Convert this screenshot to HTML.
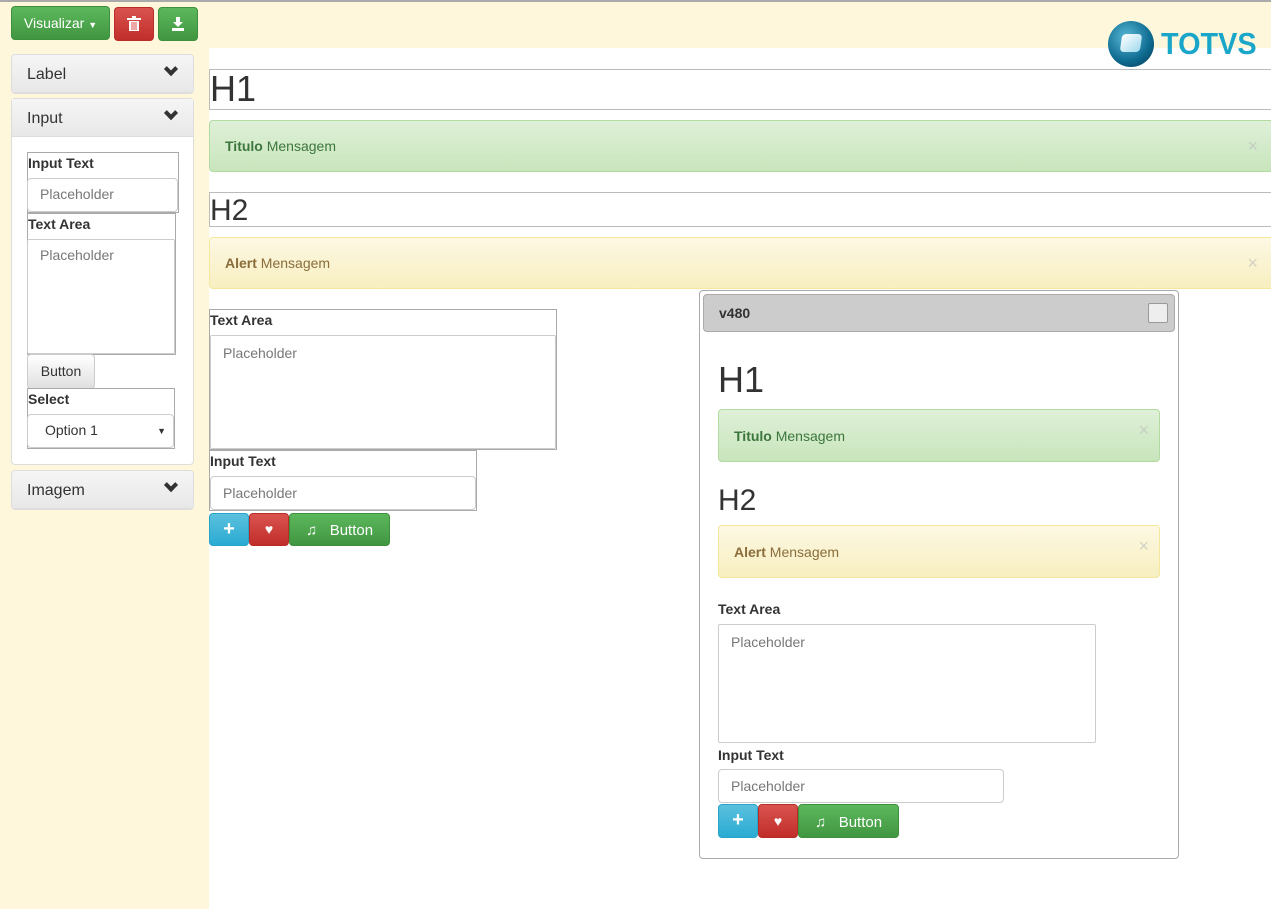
<!DOCTYPE html>
<html><head><meta charset="utf-8"><style>
*{box-sizing:border-box;margin:0;padding:0}
body{width:1271px;height:909px;overflow:hidden;background:#fff;font-family:"Liberation Sans",sans-serif;font-size:14px;color:#333;position:relative}
.a{position:absolute}
.beige{background:#fff7dc}
.btn{position:absolute;border-radius:4px;color:#fff;text-align:center;font-size:14px}
.g{background:linear-gradient(#5cb85c,#419641);border:1px solid #3e8f3e}
.r{background:linear-gradient(#d9534f,#c12e2a);border:1px solid #b92c28}
.b{background:linear-gradient(#5bc0de,#2aabd2);border:1px solid #28a4c9}
.panel{position:absolute;border:1px solid #ddd;border-radius:4px;background:#fff}
.ph{background:linear-gradient(#f5f5f5,#e8e8e8);height:38px;padding:11px 15px;font-size:16px;position:relative;border-bottom:1px solid #ddd}
.chev{position:absolute;right:17px;top:9px;width:10px;height:10px;border-right:4px solid #333;border-bottom:4px solid #333;transform:rotate(45deg)}
.box{position:absolute;border:1px solid #aaa}
.lbl{font-weight:bold;font-size:14px;padding-left:0;padding-top:2px}
.inp{position:absolute;border:1px solid #ccc;border-radius:4px;color:#777;padding:7px 12px;font-size:14px;background:#fff}
.h{position:absolute;border:1px solid #bbb;font-size:36px;line-height:38px}
.al{position:absolute;border-radius:4px;padding:0 15px;line-height:50px;font-size:14px}
.ok{background:linear-gradient(#dff0d8,#c8e5bc);border:1px solid #b2dba1;color:#3c763d}
.wa{background:linear-gradient(#fcf8e3,#f8efc0);border:1px solid #f5e79e;color:#8a6d3b}
.x{position:absolute;right:10px;top:0;color:#bbb;font-size:18px;opacity:.6}
</style></head><body>
<div class="a" style="left:0;top:0;width:1271px;height:2px;background:#aaa"></div>
<div class="a beige" style="left:0;top:2px;width:1271px;height:46px"></div>
<div class="a beige" style="left:0;top:48px;width:209px;height:861px"></div>
<div class="btn g" style="left:11px;top:6px;width:99px;height:34px;line-height:32px">Visualizar <span style="font-size:9px">▼</span></div>
<div class="btn r" style="left:114px;top:7px;width:40px;height:34px;line-height:32px">
<svg width="14" height="16" viewBox="0 0 14 16" style="margin-top:8px"><rect x="0" y="2" width="14" height="2" fill="#fff"/><rect x="5" y="0" width="4" height="2" fill="#fff"/><path d="M2 5h10v10H2z" fill="#fff"/><path d="M5 6v8M7 6v8M9 6v8" stroke="#d9534f" stroke-width="1"/></svg></div>
<div class="btn g" style="left:158px;top:7px;width:40px;height:34px">
<svg width="14" height="14" viewBox="0 0 14 14" style="margin-top:9px"><path d="M5 0h4v5h3L7 10 2 5h3z" fill="#fff"/><rect x="1" y="11" width="12" height="3" fill="#fff"/></svg></div>
<!-- logo -->
<div class="a" style="left:1108px;top:21px;width:46px;height:46px;border-radius:50%;background:radial-gradient(circle at 40% 35%,#5ab8d6,#0d6a8f 60%,#08364f)"></div>
<div class="a" style="left:1121px;top:34px;width:20px;height:18px;background:linear-gradient(135deg,#fff,#9fd9ee);border-radius:4px;transform:skew(-8deg)"></div>
<div class="a" style="left:1161px;top:26px;font-size:31px;font-weight:bold;color:#1aa6c9;line-height:36px;transform:scaleX(0.93);transform-origin:left">TOTVS</div>
<!-- sidebar -->
<div class="panel" style="left:11px;top:54px;width:183px;height:40px;overflow:hidden"><div class="ph">Label<div class="chev"></div></div></div>
<div class="panel" style="left:11px;top:98px;width:183px;height:367px"><div class="ph">Input<div class="chev"></div></div>
<div class="box" style="left:15px;top:53px;width:152px;height:61px"><div class="lbl">Input Text</div></div>
<div class="inp" style="left:15px;top:79px;width:151px;height:34px">Placeholder</div>
<div class="box" style="left:15px;top:114px;width:149px;height:142px"><div class="lbl">Text Area</div></div>
<div class="inp" style="left:15px;top:140px;width:148px;height:115px;border-radius:2px">Placeholder</div>
<div class="a" style="left:15px;top:255px;width:68px;height:35px;border:1px solid #ccc;border-radius:4px;background:linear-gradient(#fff,#e0e0e0);text-align:center;line-height:33px">Button</div>
<div class="box" style="left:15px;top:289px;width:148px;height:61px"><div class="lbl">Select</div></div>
<div class="inp" style="left:15px;top:315px;width:147px;height:34px;color:#333;padding-left:17px">Option 1<span style="position:absolute;right:7px;font-size:9px;top:11px">▼</span></div>
</div>
<div class="panel" style="left:11px;top:470px;width:183px;height:40px;overflow:hidden"><div class="ph">Imagem<div class="chev"></div></div></div>
<!-- content -->
<div class="h" style="left:209px;top:69px;width:1070px;height:41px;border-right:none">H1</div>
<div class="al ok" style="left:209px;top:120px;width:1070px;height:52px"><b>Titulo</b> Mensagem<span class="x" style="right:20px;line-height:50px">×</span></div>
<div class="h" style="left:209px;top:192px;width:1070px;height:35px;font-size:30px;line-height:36px">H2</div>
<div class="al wa" style="left:209px;top:237px;width:1070px;height:52px"><b>Alert</b> Mensagem<span class="x" style="right:20px;line-height:50px">×</span></div>
<div class="box" style="left:209px;top:309px;width:348px;height:141px"><div class="lbl">Text Area</div></div>
<div class="inp" style="left:210px;top:335px;width:346px;height:114px;border-radius:2px;padding-top:9px">Placeholder</div>
<div class="box" style="left:209px;top:450px;width:268px;height:61px"><div class="lbl">Input Text</div></div>
<div class="inp" style="left:210px;top:476px;width:266px;height:34px;padding-top:8px">Placeholder</div>
<div class="btn b" style="left:209px;top:513px;width:40px;height:33px;line-height:30px;font-size:20px;font-weight:bold">+</div>
<div class="btn r" style="left:249px;top:513px;width:40px;height:33px;line-height:31px">♥</div>
<div class="btn g" style="left:289px;top:513px;width:101px;height:33px;line-height:33px;font-size:15px">♫ &nbsp;&nbsp;Button</div>
<!-- v480 -->
<div class="a" style="left:699px;top:290px;width:480px;height:569px;border:1px solid #aaa;border-radius:4px;background:#fff">
<div class="a" style="left:3px;top:3px;width:472px;height:38px;background:#ccc;border:1px solid #aaa;border-radius:4px;font-weight:bold;padding:10px 15px">v480<div class="a" style="right:6px;top:8px;width:20px;height:20px;background:#eee;border:1px solid #999;border-radius:2px"></div></div>
<div class="a" style="left:18px;top:68px;font-size:36px">H1</div>
<div class="al ok" style="left:18px;top:118px;width:442px;height:53px;line-height:52px"><b>Titulo</b> Mensagem<span class="x" style="line-height:40px">×</span></div>
<div class="a" style="left:18px;top:193px;font-size:30px">H2</div>
<div class="al wa" style="left:18px;top:234px;width:442px;height:53px;line-height:52px"><b>Alert</b> Mensagem<span class="x" style="line-height:40px">×</span></div>
<div class="a lbl" style="left:18px;top:310px;padding:0">Text Area</div>
<div class="inp" style="left:18px;top:333px;width:378px;height:119px;border-radius:2px;padding-top:9px">Placeholder</div>
<div class="a lbl" style="left:18px;top:456px;padding:0">Input Text</div>
<div class="inp" style="left:18px;top:478px;width:286px;height:34px;padding-top:8px">Placeholder</div>
<div class="btn b" style="left:18px;top:513px;width:40px;height:34px;line-height:31px;font-size:20px;font-weight:bold">+</div>
<div class="btn r" style="left:58px;top:513px;width:40px;height:34px;line-height:32px">♥</div>
<div class="btn g" style="left:98px;top:513px;width:101px;height:34px;line-height:35px;font-size:15px">♫ &nbsp;&nbsp;Button</div>
</div>
</body></html>
